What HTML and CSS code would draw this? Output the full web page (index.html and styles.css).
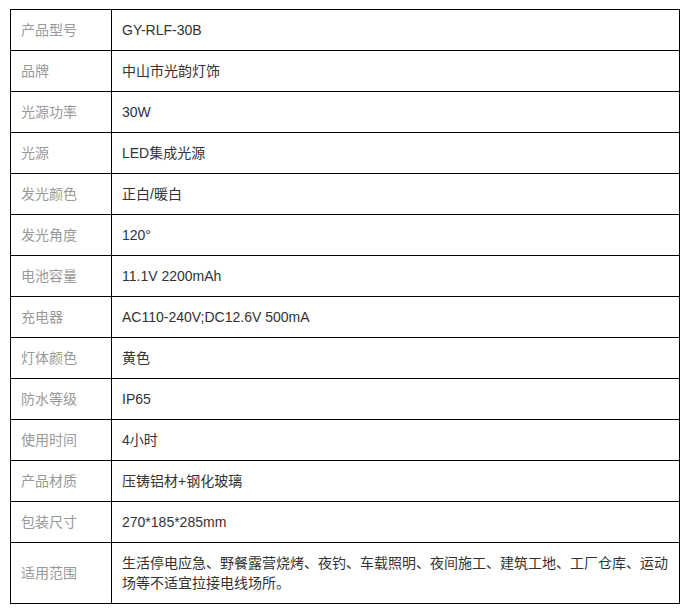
FILE: index.html
```html
<!DOCTYPE html>
<html lang="zh">
<head>
<meta charset="utf-8">
<link rel="stylesheet" href="styles.css">
</head>
<body>
<table class="spec">
<tbody>
<tr><td class="k">产品型号</td><td class="v">GY-RLF-30B</td></tr>
<tr><td class="k">品牌</td><td class="v">中山市光韵灯饰</td></tr>
<tr><td class="k">光源功率</td><td class="v">30W</td></tr>
<tr><td class="k">光源</td><td class="v">LED集成光源</td></tr>
<tr><td class="k">发光颜色</td><td class="v">正白/暖白</td></tr>
<tr><td class="k">发光角度</td><td class="v">120°</td></tr>
<tr><td class="k">电池容量</td><td class="v">11.1V 2200mAh</td></tr>
<tr><td class="k">充电器</td><td class="v">AC110-240V;DC12.6V 500mA</td></tr>
<tr><td class="k">灯体颜色</td><td class="v">黄色</td></tr>
<tr><td class="k">防水等级</td><td class="v">IP65</td></tr>
<tr><td class="k">使用时间</td><td class="v">4小时</td></tr>
<tr><td class="k">产品材质</td><td class="v">压铸铝材+钢化玻璃</td></tr>
<tr><td class="k">包装尺寸</td><td class="v">270*185*285mm</td></tr>
<tr><td class="k">适用范围</td><td class="v">生活停电应急、野餐露营烧烤、夜钓、车载照明、夜间施工、建筑工地、工厂仓库、运动场等不适宜拉接电线场所。</td></tr>
</tbody>
</table>
</body>
</html>
```
FILE: styles.css
```css
html, body {
  margin: 0;
  padding: 0;
  background: #fff;
}
body {
  padding: 9px 0 0 10px;
  font-family: "Liberation Sans", "Noto Sans CJK SC", sans-serif;
  font-size: 14px;
}
.spec {
  border-collapse: collapse;
  width: 670px;
  table-layout: fixed;
}
.spec td {
  border: 1px solid #000;
  padding: 10px;
  line-height: 20px;
  vertical-align: middle;
}
.spec .k {
  width: 80px;
  color: #999;
}
.spec .v {
  color: #333;
}
```
